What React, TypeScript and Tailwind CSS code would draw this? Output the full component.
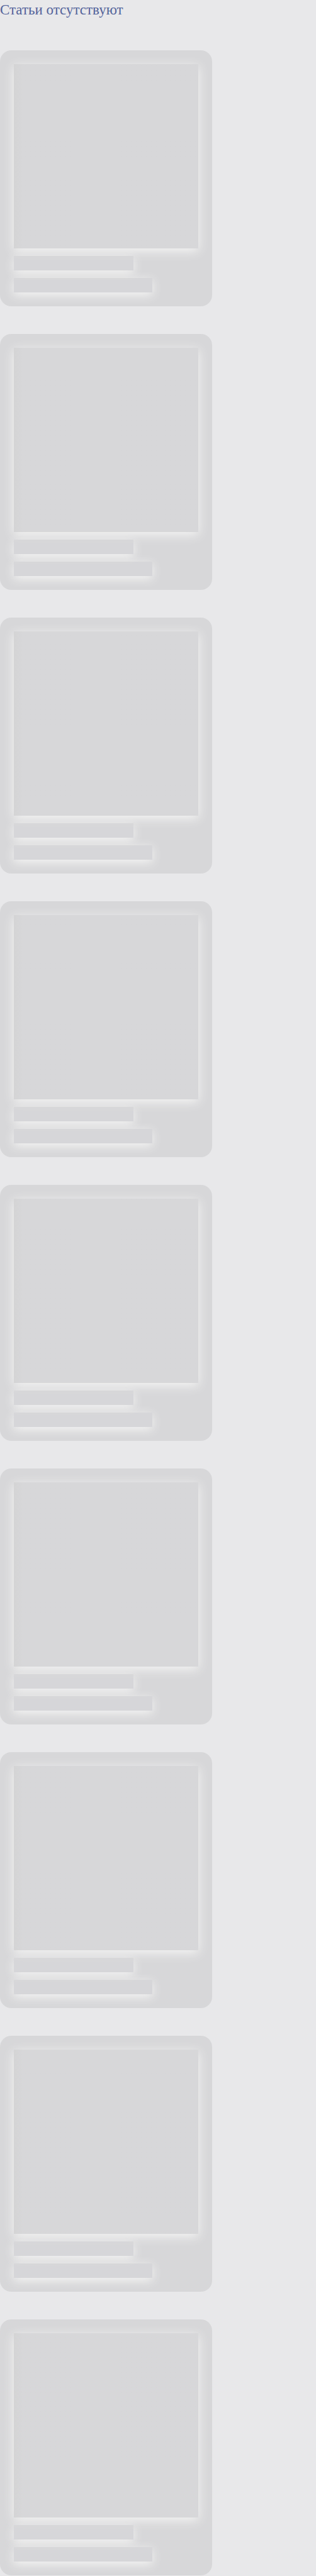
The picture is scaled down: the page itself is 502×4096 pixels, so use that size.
const PLACEHOLDERS = Array.from({ length: 9 }, (_, index) => index);

function SkeletonCard() {
  return (
    <li className="flex w-fit flex-col gap-3 rounded-[18px] bg-[#d7d7d9] p-[22px]">
      <div className="size-[293px] bg-linear-to-r from-[#d4d4d5] to-[#d7d7d9] to-5% shadow-[0_4px_16px_#f6f6f5]" />
      <div className="h-[23px] w-[190px] bg-[#d6d6d8]/85 shadow-[0_4px_16px_#f6f6f5]" />
      <div className="h-[23px] w-[220px] bg-[#d6d6d8]/85 shadow-[0_4px_16px_#f6f6f5]" />
    </li>
  );
}

export default function App() {
  return (
    <main className="min-h-screen bg-[#e8e8ea] font-['Liberation_Serif',serif]">
      <h1 className="pt-0.5 text-[23px] leading-7 text-[#53639a]">Статьи отсутствуют</h1>
      <ul aria-busy="true" className="mt-[50px] flex flex-col gap-11">
        {PLACEHOLDERS.map((id) => (
          <SkeletonCard key={id} />
        ))}
      </ul>
    </main>
  );
}
